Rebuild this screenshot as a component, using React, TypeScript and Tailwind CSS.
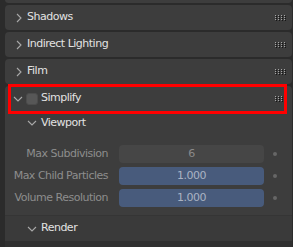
import type { ReactNode } from "react";

function Grip() {
  const cols = [0, 3, 6, 9];
  const rows = [0, 2, 4];
  return (
    <svg width="11" height="6" viewBox="0 0 11 6" className="shrink-0">
      {cols.map((c) =>
        rows.map((r) => (
          <g key={`${c}-${r}`}>
            <rect x={c + 1} y={r + 1} width="1" height="1" fill="#151515" />
            <rect x={c} y={r} width="1" height="1" fill="#a5a5a5" />
          </g>
        ))
      )}
    </svg>
  );
}

function ChevronRight() {
  return (
    <svg width="6" height="10" viewBox="0 0 6 10" className="shrink-0">
      <polyline points="1,1 5,5 1,9" fill="none" stroke="#a9a9a9" strokeWidth="1.1" />
    </svg>
  );
}

function ChevronDown() {
  return (
    <svg width="10" height="6" viewBox="0 0 10 6" className="shrink-0">
      <polyline points="1,1 5,5 9,1" fill="none" stroke="#a9a9a9" strokeWidth="1.1" />
    </svg>
  );
}

function ClosedPanel({ title }: { title: string }) {
  return (
    <div className="flex h-[25px] items-center rounded-[4px] bg-[#3d3d3d] pl-[11px] pr-[6px]">
      <ChevronRight />
      <span className="ml-[5px] text-[#e2e2e2]">{title}</span>
      <span className="ml-auto">
        <Grip />
      </span>
    </div>
  );
}

function Row({ label, value, blue }: { label: string; value: string; blue?: boolean }) {
  return (
    <div className="flex h-[18px] items-center">
      <span className="w-[103px] text-right text-[#8d8d8d]">{label}</span>
      <div
        className={`ml-[11px] flex h-[18px] w-[145px] items-center justify-center rounded-[4px] ${
          blue ? "bg-[#485b7c] text-[#aab3c3]" : "bg-[#464646] text-[#8a8a8a]"
        }`}
      >
        {value}
      </div>
      <span className="ml-[9px] h-[4px] w-[4px] rounded-full bg-[#666666]" />
    </div>
  );
}

function SubHeader({ children }: { children: ReactNode }) {
  return <div className="flex items-center pl-[22px]">{children}</div>;
}

export default function App() {
  return (
    <div
      className="h-[247px] w-[293px] overflow-hidden bg-[#2b2b2b] text-[11px] tracking-[-0.5px]"
      style={{ fontFamily: '"DejaVu Sans", "Liberation Sans", sans-serif' }}
    >
      <div className="flex flex-col gap-[2px] pl-[5px] pr-[1px]">
        <div className="-mt-[4px] h-[7px] rounded-[4px] bg-[#3d3d3d]" />
        <ClosedPanel title="Shadows" />
        <ClosedPanel title="Indirect Lighting" />
        <ClosedPanel title="Film" />

        <div className="relative rounded-t-[4px] bg-[#3d3d3d]">
          <div className="flex h-[25px] items-center pl-[8px] pr-[6px]">
            <ChevronDown />
            <span className="ml-[3px] h-[12px] w-[12px] rounded-[3px] border border-[#4c4c4c] bg-[#575757]" />
            <span className="ml-[3px] text-[#e2e2e2]">Simplify</span>
            <span className="ml-auto">
              <Grip />
            </span>
          </div>

          <SubHeader>
            <div className="flex h-[24px] items-center">
              <ChevronDown />
              <span className="ml-[4px] text-[#e2e2e2]">Viewport</span>
            </div>
          </SubHeader>

          <div className="flex flex-col gap-[4px] pt-[10px] pb-[8px]">
            <Row label="Max Subdivision" value="6" />
            <Row label="Max Child Particles" value="1.000" blue />
            <Row label="Volume Resolution" value="1.000" blue />
          </div>

          <div className="border-t border-[#353535] bg-[#3a3a3a]">
            <SubHeader>
              <div className="flex h-[25px] items-center">
                <ChevronDown />
                <span className="ml-[4px] text-[#e2e2e2]">Render</span>
              </div>
            </SubHeader>
          </div>
          <div className="h-[8px] bg-[#303030]" />

          <div className="pointer-events-none absolute left-[3px] top-[-2px] h-[30px] w-[279px] border-[3px] border-[#ff0000]" />
        </div>
      </div>
    </div>
  );
}
